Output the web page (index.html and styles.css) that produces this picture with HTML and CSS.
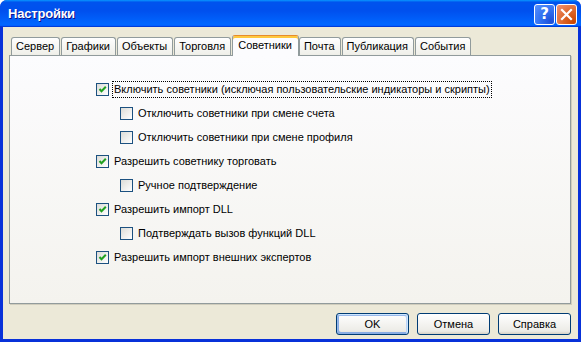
FILE: index.html
```html
<!DOCTYPE html>
<html lang="ru">
<head>
    <meta charset="UTF-8">
    <title>Настройки</title>
    <link rel="stylesheet" href="styles.css">
</head>
<body>
    <div class="window">
        <div class="title-bar">
            <span class="title">Настройки</span>
            <div class="title-buttons">
                <span class="tbtn help">?</span>
                <span class="tbtn close">
                    <svg width="13" height="13" viewBox="0 0 13 13"><path d="M2 2 L11 11 M11 2 L2 11" stroke="#fff" stroke-width="2.2" stroke-linecap="square"/></svg>
                </span>
            </div>
        </div>

        <div class="body">
            <div class="tabs">
                <span class="tab">Сервер</span>
                <span class="tab">Графики</span>
                <span class="tab">Объекты</span>
                <span class="tab">Торговля</span>
                <span class="tab active">Советники</span>
                <span class="tab">Почта</span>
                <span class="tab">Публикация</span>
                <span class="tab">События</span>
            </div>

            <div class="panel">
                <div class="row">
                    <span class="box"><svg width="11" height="11" viewBox="0 0 11 11"><path d="M2.5 5 L4.5 7.2 L8.8 2.8" fill="none" stroke="#21a121" stroke-width="2"/></svg></span>
                    <span class="label focus">Включить советники (исключая пользовательские индикаторы и скрипты)</span>
                </div>
                <div class="row sub">
                    <span class="box"></span>
                    <span class="label">Отключить советники при смене счета</span>
                </div>
                <div class="row sub">
                    <span class="box"></span>
                    <span class="label">Отключить советники при смене профиля</span>
                </div>
                <div class="row">
                    <span class="box"><svg width="11" height="11" viewBox="0 0 11 11"><path d="M2.5 5 L4.5 7.2 L8.8 2.8" fill="none" stroke="#21a121" stroke-width="2"/></svg></span>
                    <span class="label">Разрешить советнику торговать</span>
                </div>
                <div class="row sub">
                    <span class="box"></span>
                    <span class="label">Ручное подтверждение</span>
                </div>
                <div class="row">
                    <span class="box"><svg width="11" height="11" viewBox="0 0 11 11"><path d="M2.5 5 L4.5 7.2 L8.8 2.8" fill="none" stroke="#21a121" stroke-width="2"/></svg></span>
                    <span class="label">Разрешить импорт DLL</span>
                </div>
                <div class="row sub">
                    <span class="box"></span>
                    <span class="label">Подтверждать вызов функций DLL</span>
                </div>
                <div class="row">
                    <span class="box"><svg width="11" height="11" viewBox="0 0 11 11"><path d="M2.5 5 L4.5 7.2 L8.8 2.8" fill="none" stroke="#21a121" stroke-width="2"/></svg></span>
                    <span class="label">Разрешить импорт внешних экспертов</span>
                </div>
            </div>

            <div class="buttons">
                <button class="default">OK</button>
                <button>Отмена</button>
                <button>Справка</button>
            </div>
        </div>
    </div>
</body>
</html>
```

FILE: styles.css
```css
html, body {
    margin: 0;
    padding: 0;
    background: #ffffff;
}
body {
    font-family: "Liberation Sans", Arial, sans-serif;
    font-size: 11px;
    color: #000;
}
.window {
    width: 581px;
    height: 342px;
    display: flex;
    flex-direction: column;
    background: #0831d9;
    border-radius: 7px 7px 0 0;
    overflow: hidden;
}
.title-bar {
    height: 27px;
    flex: none;
    display: flex;
    justify-content: space-between;
    align-items: flex-start;
    padding: 0 4px 0 8px;
    background: linear-gradient(180deg, #0997ff, #0053ee 8%, #0050ee 40%, #0066ff 88%, #0066ff 93%, #005bff 95%, #003dd7 96%, #003dd7);
}
.title {
    margin-top: 6px;
    color: #fff;
    font-weight: bold;
    font-size: 13px;
    letter-spacing: -0.2px;
    text-shadow: 1px 1px #0f1089;
}
.title-buttons {
    display: flex;
    gap: 1px;
    margin-top: 4px;
}
.tbtn {
    width: 19px;
    height: 19px;
    border: 1px solid #fff;
    border-radius: 3px;
    display: flex;
    align-items: center;
    justify-content: center;
    color: #fff;
}
.help {
    background: radial-gradient(circle at 85% 85%, #1d4fd8 0, #2f6ff0 45%, #5a92ff 100%);
    font-family: "DejaVu Sans", sans-serif;
    font-weight: bold;
    font-size: 15px;
    line-height: 19px;
}
.close {
    background: radial-gradient(circle at 90% 90%, #cc4600 0, #dc6527 45%, #f09477 100%);
}
.body {
    flex: 1;
    margin: 0 3px 3px;
    background: #ece9d8;
    padding: 8px 7px 0 6px;
    display: flex;
    flex-direction: column;
}
.tabs {
    height: 20px;
    display: flex;
    align-items: flex-end;
    padding-left: 2px;
    gap: 1px;
}
.tab {
    height: 17px;
    line-height: 17px;
    padding: 0 5px 0 4px;
    border: 1px solid #919b9c;
    border-bottom: none;
    border-radius: 3px 3px 0 0;
    background: linear-gradient(180deg, #fff, #fafaf9 26%, #f0f0ea 95%, #ecebe5);
}
.tab.active {
    height: 20px;
    line-height: 19px;
    margin: 0 -1px -1px 0;
    padding: 0 6px 0 5px;
    position: relative;
    z-index: 1;
    background: #fcfcfe;
    border-top-color: #e68b2c;
    box-shadow: inset 0 2px #ffc83c;
}
.panel {
    height: 226px;
    border: 1px solid #919b9c;
    background: linear-gradient(180deg, #fcfcfe, #f4f3ee);
    box-shadow: 1px 1px #d0cdbd;
    padding: 21px 0 0 86px;
}
.row {
    height: 24px;
    display: flex;
    align-items: center;
    gap: 3px;
}
.row.sub {
    padding-left: 24px;
}
.box {
    width: 11px;
    height: 11px;
    flex: none;
    display: flex;
    border: 1px solid #1c5180;
    background: linear-gradient(135deg, #dcdcd7, #fff);
}
.label {
    line-height: 13px;
    padding: 1px 1px;
    border: 1px dotted transparent;
}
.label.focus {
    border-color: #000;
}
.buttons {
    display: flex;
    justify-content: flex-end;
    gap: 8px;
    margin-top: 9px;
}
button {
    width: 73px;
    height: 22px;
    font-family: "Liberation Sans", Arial, sans-serif;
    font-size: 11px;
    color: #000;
    border: 1px solid #003c74;
    border-radius: 3px;
    background: linear-gradient(180deg, #fff, #ecebe6 86%, #d6d0c5);
    padding: 0;
}
button.default {
    box-shadow: inset -1px 1px #cee7ff, inset 1px 2px #98b8ea, inset -2px 2px #bcd4f6, inset 1px -1px #89ade4, inset 2px -2px #89ade4;
}
```
